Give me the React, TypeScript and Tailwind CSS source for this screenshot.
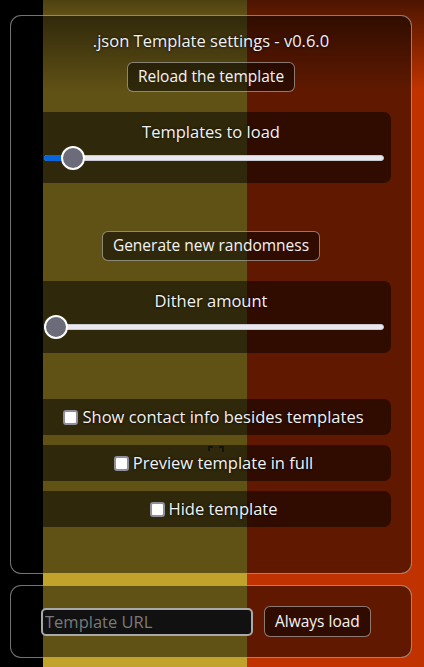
import React from "react";

const font = { fontFamily: '"Open Sans", "Noto Sans", sans-serif' };

function Slider({ value }: { value: number }) {
  // value 0..1, thumb travels inside the track
  const pos = 12 + value * (340 - 24);
  return (
    <div className="relative ml-[13px] mr-[7px] h-6">
      <div className="absolute left-0 right-0 top-[9px] h-[6px] rounded-full bg-[#e8e8ee] border border-[#c9c9d2]" />
      <div
        className="absolute left-0 top-[9px] h-[6px] rounded-l-full bg-[#0a64dc]"
        style={{ width: pos }}
      />
      <div
        className="absolute top-0 h-6 w-6 rounded-full border-2 border-white bg-[#6b6b7a]"
        style={{ left: pos - 12 }}
      />
    </div>
  );
}

function CheckRow({ label }: { label: string }) {
  return (
    <div className="flex h-9 items-center justify-center gap-[4px] rounded-[7px] bg-black/50 pl-[5px]">
      <span className="h-[15px] w-[15px] rounded-[3px] border-2 border-[#8e8e9c] bg-white" />
      <span>{label}</span>
    </div>
  );
}

function Button({ children, className = "" }: { children: React.ReactNode; className?: string }) {
  return (
    <button
      className={`rounded-[6px] border border-white/45 bg-black/50 px-[10px] text-[15.5px] text-[#f4f4f4] ${className}`}
      style={font}
    >
      {children}
    </button>
  );
}

export default function App() {
  return (
    <div
      className="relative h-[667px] w-[424px] overflow-hidden text-[16.5px] text-[#f2f2f2] [text-shadow:0_0_3px_#000]"
      style={font}
    >
      {/* canvas underneath */}
      <div className="absolute inset-0 flex">
        <div className="w-[43px] bg-black" />
        <div className="w-[204px] bg-[#c1a22b]" />
        <div className="flex-1 bg-[#c03300]" />
      </div>
      <div className="absolute inset-x-0 top-0 h-[90px] bg-gradient-to-b from-black/60 to-transparent" />

      <div className="relative flex flex-col gap-[11px] pl-[10px] pr-[12px] pt-[15px]">
        {/* settings panel */}
        <div className="flex h-[559px] flex-col rounded-[11px] border border-white/45 bg-black/50 px-5 pt-[13px]">
          <div className="h-6 text-center leading-6">.json Template settings - v0.6.0</div>
          <div className="mt-[9px] flex justify-center">
            <Button className="h-[30px]">Reload the template</Button>
          </div>

          <div className="mt-5 h-[71px] rounded-[7px] bg-black/50 pt-[8px]">
            <div className="h-6 text-center leading-6">Templates to load</div>
            <div className="mt-[2px]">
              <Slider value={0.054} />
            </div>
          </div>

          <div className="mt-12 flex justify-center">
            <Button className="h-[30px]">Generate new randomness</Button>
          </div>

          <div className="mt-5 h-[72px] rounded-[7px] bg-black/50 pt-[8px]">
            <div className="h-6 text-center leading-6">Dither amount</div>
            <div className="mt-[2px]">
              <Slider value={0} />
            </div>
          </div>

          <div className="relative mt-[46px] flex flex-col gap-[10px]">
            <CheckRow label="Show contact info besides templates" />
            <CheckRow label="Preview template in full" />
            <CheckRow label="Hide template" />
            <svg
              className="absolute left-[176px] top-[46px]"
              width="18"
              height="9"
              viewBox="0 0 18 9"
            >
              <path d="M1 1h5v2H3v3H1z M12 1h5v6h-2V3h-3z" fill="#141410" />
            </svg>
          </div>
        </div>

        {/* url panel */}
        <div className="flex h-[73px] items-center gap-[11px] rounded-[11px] border border-white/45 bg-black/50 pl-[30px]">
          <input
            placeholder="Template URL"
            className="h-7 w-[212px] rounded-[5px] border-2 border-[#a9a9a9] bg-[#111] px-[2px] text-[16.5px] placeholder:text-[#7a7a7a] outline-none [text-shadow:none]"
            style={font}
          />
          <Button className="h-[31px]">Always load</Button>
        </div>
      </div>
    </div>
  );
}
